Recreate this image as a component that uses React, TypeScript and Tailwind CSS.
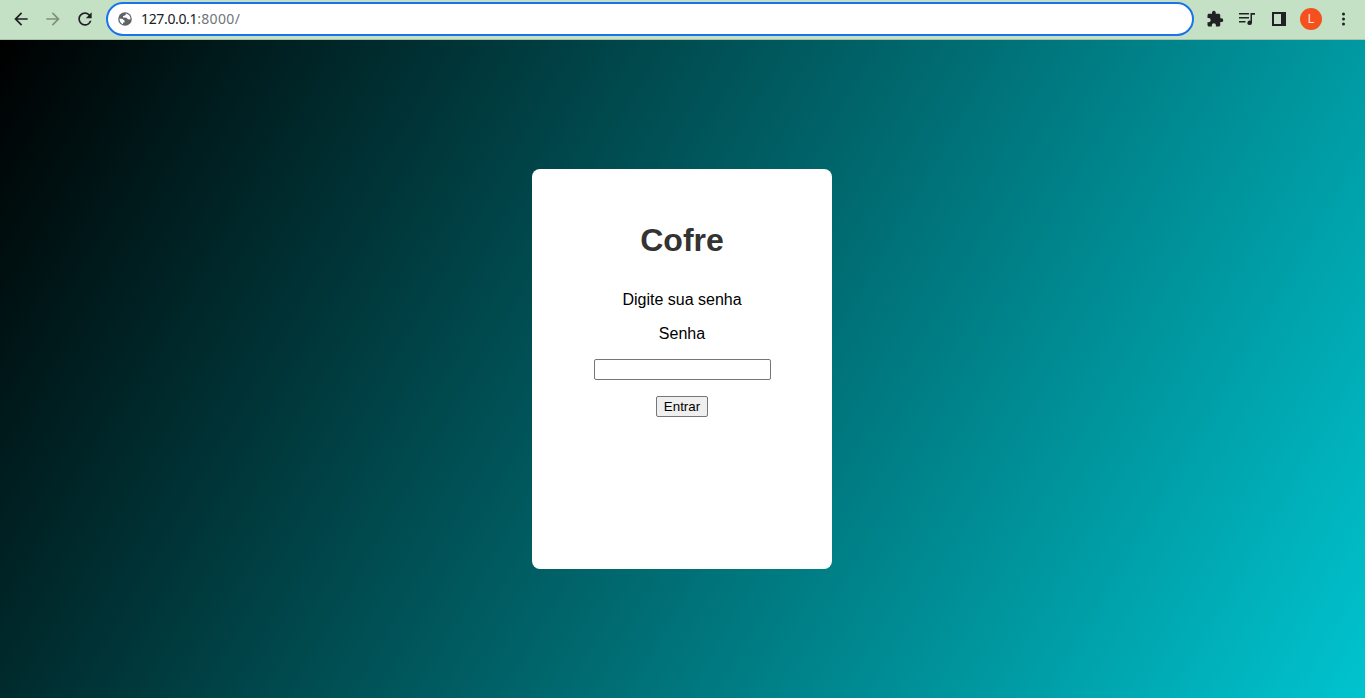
import { MdArrowBack, MdArrowForward, MdExtension, MdRefresh } from "react-icons/md";

function Toolbar() {
  return (
    <header className="flex h-10 shrink-0 items-start border-b border-[#a9c2a9] bg-[#c5e1c5] pt-[2px] text-[#202124]">
      <div className="flex h-[34px] w-[106px] items-center gap-[12px] pl-[11px]">
        <MdArrowBack size={20} />
        <MdArrowForward size={20} className="text-[#7f907f]" />
        <MdRefresh size={20} />
      </div>
      <div className="flex h-[34px] w-[1088px] items-center rounded-full border-2 border-[#1a73e8] bg-white pl-[10px]">
        <svg width="14" height="14" viewBox="0 0 14 14" className="text-[#5f6368]">
          <circle cx="7" cy="7" r="6.8" fill="currentColor" />
          <path
            fill="white"
            d="M1.5 6.4 4.6 7.1 6.6 8.7v1.5L5 10.8v1.5C3 11.500 1.400 9.600 1.500 6.400zM7.800 1.500v1.300L6.400 3.700 5 4.100v1.300l3.600.3 1.200 1.600 2.600.3c.5-2.500-1-5.300-4.600-6.100z"
          />
        </svg>
        <span className="ml-[9px] font-['Noto_Sans',sans-serif] text-[14px] leading-5 tracking-[-0.35px] text-[#202124]">
          127.0.0.1<span className="tracking-[0.35px] text-[#70757a]">:8000/</span>
        </span>
      </div>
      <div className="flex h-[34px] flex-1 items-center">
        <MdExtension size={18} className="ml-[12px]" />
        <svg className="ml-[15px]" width="17" height="14" viewBox="0 0 17 14" fill="currentColor">
          <path d="M0 1h10v1.500H0zM0 5h10v1.500H0zM0 9h6.500v1.500H0zM11.500 1H16v1.700h-3v8.100a2.300 2.300 0 1 1-1.500-2.150z" />
        </svg>
        <svg className="ml-[16px]" width="14" height="14" viewBox="0 0 14 14">
          <path fill="currentColor" fillRule="evenodd" d="M0 0h14v14H0zM2 2v10h7V2z" />
        </svg>
        <span className="ml-[14px] flex size-[22px] items-center justify-center rounded-full bg-[#f4511e] font-[Roboto,sans-serif] text-[12px] text-[#ffe9e2]">
          L
        </span>
        <svg className="ml-[20px]" width="3" height="14" viewBox="0 0 3 14" fill="currentColor">
          <circle cx="1.5" cy="2" r="1.5" />
          <circle cx="1.5" cy="7" r="1.5" />
          <circle cx="1.5" cy="12" r="1.5" />
        </svg>
      </div>
    </header>
  );
}

export default function App() {
  return (
    <div className="flex h-[698px] w-[1365px] flex-col overflow-hidden font-['Liberation_Sans',Arial,sans-serif]">
      <Toolbar />
      <main className="flex flex-1 items-center justify-center bg-[linear-gradient(120deg,#000000,#00c4cf)] pr-px">
        <form className="flex h-[400px] w-[300px] flex-col items-center rounded-lg bg-white pt-[53px] text-base leading-[18px] text-black">
          <h1 className="text-[32px] leading-[36px] font-bold text-[#333333]">Cofre</h1>
          <p className="mt-[33px]">Digite sua senha</p>
          <label htmlFor="senha" className="mt-4">Senha</label>
          <input
            id="senha"
            type="password"
            className="mt-[16px] ml-px h-[21px] w-[177px] rounded-[2px] border border-[#767676] bg-white px-1 text-[13.333px] outline-none"
          />
          <button
            type="button"
            className="mt-4 h-[21px] w-[52px] rounded-[2px] border border-[#767676] bg-[#efefef] text-[13.333px] leading-[15px]"
          >
            Entrar
          </button>
        </form>
      </main>
    </div>
  );
}
